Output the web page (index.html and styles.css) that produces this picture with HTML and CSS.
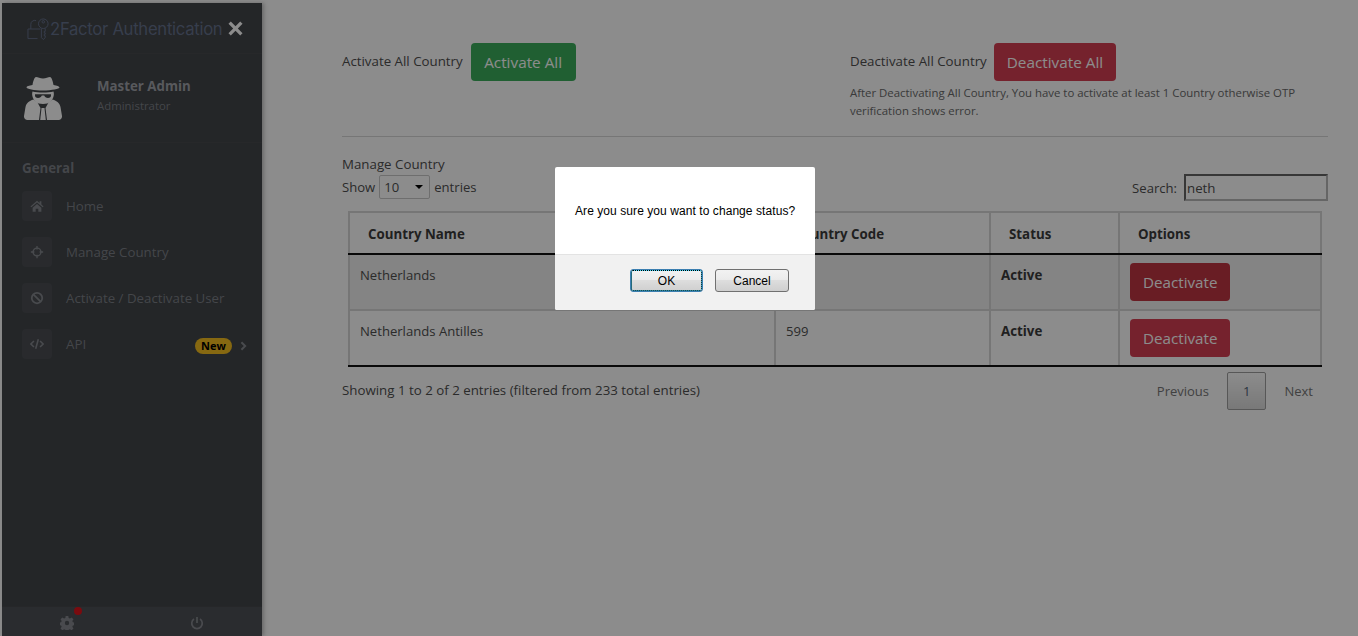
FILE: index.html
```html
<!DOCTYPE html>
<html lang="en">
<head>
  <meta charset="UTF-8" />
  <title>Manage Country</title>
  <link rel="stylesheet" href="styles.css">
</head>
<body>
  <div class="page">
    <aside class="sidebar">
      <div class="brand">
        <svg class="brand-logo" viewBox="0 0 24 24" fill="none" stroke="currentColor" stroke-width="1">
          <path d="M1 12h13M1 12v10h10M4 12V7a4 4 0 0 1 5.500-3.700" />
          <circle cx="17" cy="6.500" r="5" />
          <circle cx="17" cy="4.500" r="1.300" />
          <path d="M15 11.500V21l2 2 2-2v-2h-1v-1.500h1V16h-1v-1.500h1v-3" />
        </svg>
        <span class="brand-name">2Factor Authentication</span>
        <svg class="brand-close" viewBox="0 0 16 16" fill="currentColor">
          <path d="M3 0.500 8 5.500 13 0.500 15.500 3 10.500 8 15.500 13 13 15.500 8 10.500 3 15.500 0.500 13 5.500 8 0.500 3z" />
        </svg>
      </div>
      <div class="profile">
        <svg class="profile-icon" viewBox="0 0 38 44" fill="currentColor">
          <path d="M12 1c2 0 4 1.500 7 1.500S24 1 26 1c1.500 0 3 4.500 3.500 8 3.500.6 6 1.500 6 2.500S28 14.500 19 14.500 2.500 13 2.500 11.500 5 9.600 8.500 9C9 5.500 10.500 1 12 1z" />
          <path fill-rule="evenodd" d="M8.500 15.500c3 .7 6.500 1 10.500 1s7.500 -.3 10.500 -1c.5 1.500 .5 3.500 0 5-1 4 -4 7.500 -10.500 7.500S9.500 24.500 8.500 20.500c-.5 -1.500 -.5 -3.500 0 -5zM11 18.300v1.200c0 1.500 1 2.500 3 2.500s3.200 -1 3.800 -2.500h2.400c.6 1.500 1.800 2.500 3.800 2.500s3 -1 3 -2.500v-1.200z" />
          <path d="M9.500 23.500C5 25 2.500 27 1.500 31L0 40c-.2 2 1 4 3.500 4H15l1.500 -12-3 -5.500zM28.500 23.500c4.500 1.500 7 3.500 8 7.500l1.500 9c.2 2 -1 4 -3.500 4H23l-1.500 -12 3 -5.500z" />
          <path d="M17.500 32h3l1.300 12h-5.600z" />
        </svg>
        <div class="profile-text">
          <div class="profile-name">Master Admin</div>
          <div class="profile-role">Administrator</div>
        </div>
      </div>
      <nav class="nav">
        <h3 class="nav-title">General</h3>
        <a class="nav-item">
          <span class="nav-icon">
            <svg viewBox="0 0 16 16" fill="currentColor"><path d="M8 2 0.500 8.500l1 1L8 4l6.500 5.500 1 -1L13 6.300V2.500h-2v2zM3 10 8 5.700 13 10v4.500H9.500V11h-3v3.500H3z" /></svg>
          </span>
          <span>Home</span>
        </a>
        <a class="nav-item">
          <span class="nav-icon">
            <svg viewBox="0 0 16 16" fill="none" stroke="currentColor" stroke-width="1.500"><circle cx="8" cy="8" r="4.500" /><path d="M8 1v4M8 11v4M1 8h4M11 8h4" /></svg>
          </span>
          <span>Manage Country</span>
        </a>
        <a class="nav-item">
          <span class="nav-icon">
            <svg viewBox="0 0 16 16" fill="none" stroke="currentColor" stroke-width="2"><circle cx="8" cy="8" r="6" /><path d="M3.800 3.800l8.400 8.400" /></svg>
          </span>
          <span>Activate / Deactivate User</span>
        </a>
        <a class="nav-item">
          <span class="nav-icon">
            <svg viewBox="0 0 16 16" fill="none" stroke="currentColor" stroke-width="1.800"><path d="M4.500 4.500 1 8l3.500 3.500M11.500 4.500 15 8l-3.500 3.500M9.500 2.500l-3 11" /></svg>
          </span>
          <span>API</span>
          <span class="badge">New</span>
          <svg class="chevron" viewBox="0 0 8 12" fill="none" stroke="currentColor" stroke-width="2.400"><path d="M1.500 1.500 6 6l-4.500 4.500" /></svg>
        </a>
      </nav>
      <div class="sidebar-foot">
        <span class="foot-link">
          <svg viewBox="0 0 16 16" fill="currentColor" fill-rule="evenodd"><path d="M6.500 0h3l.4 2.300 1.500.6 1.900-1.300 2.100 2.100-1.300 1.900.6 1.500 2.300.4v3l-2.300.4-.6 1.500 1.300 1.900-2.100 2.100-1.900-1.300-1.500.6-.4 2.300h-3l-.4-2.300-1.500-.6-1.900 1.300-2.100-2.100 1.300-1.900-.6-1.500-2.300-.4v-3l2.300-.4.6-1.500-1.300-1.900 2.100-2.100 1.900 1.300 1.500-.6zM8 5.500a2.500 2.500 0 1 0 0 5 2.500 2.500 0 0 0 0-5z" /></svg>
          <i class="foot-dot"></i>
        </span>
        <span class="foot-link">
          <svg viewBox="0 0 16 16" fill="none" stroke="currentColor" stroke-width="2"><path d="M4.500 3.500a6 6 0 1 0 7 0M8 1v7" /></svg>
        </span>
      </div>
    </aside>

    <main class="main">
      <div class="bulk">
        <div class="bulk-col bulk-activate">
          <div class="bulk-row">
            <span class="bulk-label">Activate All Country</span>
            <button class="btn btn-green">Activate All</button>
          </div>
        </div>
        <div class="bulk-col">
          <div class="bulk-row">
            <span class="bulk-label">Deactivate All Country</span>
            <button class="btn btn-red">Deactivate All</button>
          </div>
          <p class="bulk-note">After Deactivating All Country, You have to activate at least 1 Country otherwise OTP verification shows error.</p>
        </div>
      </div>
      <hr class="rule">

      <div class="section-title">Manage Country</div>
      <div class="table-tools">
        <label class="length">Show <span class="fake-select">10<i class="caret"></i></span> entries</label>
        <label class="search">Search: <input type="text" value="neth"></label>
      </div>

      <table class="grid">
        <colgroup>
          <col class="col-name"><col class="col-code"><col class="col-status"><col class="col-opts">
        </colgroup>
        <thead>
          <tr><th>Country Name</th><th>Country Code</th><th>Status</th><th>Options</th></tr>
        </thead>
        <tbody>
          <tr class="hovered">
            <td>Netherlands</td><td>31</td><td><b>Active</b></td>
            <td><button class="btn btn-red btn-row">Deactivate</button></td>
          </tr>
          <tr>
            <td>Netherlands Antilles</td><td>599</td><td><b>Active</b></td>
            <td><button class="btn btn-red btn-row">Deactivate</button></td>
          </tr>
        </tbody>
      </table>

      <div class="table-foot">
        <span>Showing 1 to 2 of 2 entries (filtered from 233 total entries)</span>
        <div class="pager">
          <a>Previous</a>
          <a class="current">1</a>
          <a>Next</a>
        </div>
      </div>
    </main>
  </div>

  <div class="overlay"></div>
  <div class="dialog">
    <div class="dialog-body">Are you sure you want to change status?</div>
    <div class="dialog-foot">
      <button class="dlg-btn dlg-ok">OK</button>
      <button class="dlg-btn">Cancel</button>
    </div>
  </div>
</body>
</html>
```

FILE: styles.css
```css
html, body {
  margin: 0;
  height: 100%;
  overflow: hidden;
}
body {
  font-family: "Open Sans", sans-serif;
  font-size: 13.300px;
  color: #4f4f4f;
  background: #fff;
}
.page {
  display: flex;
  height: 633px;
  padding: 3px 0 0 2px;
}

/* Sidebar */
.sidebar {
  width: 260px;
  flex: none;
  display: flex;
  flex-direction: column;
  background: #424549;
  box-shadow: 2px 0 4px rgba(0, 0, 0, 0.25);
}
.brand {
  height: 49px;
  padding-top: 1px;
  display: flex;
  align-items: center;
  padding-left: 25px;
  border-bottom: 1px solid #47494e;
  color: #65718c;
}
.brand-logo {
  width: 23px;
  height: 24px;
}
.brand-name {
  font-family: Inter, sans-serif;
  font-size: 16.700px;
  white-space: nowrap;
  letter-spacing: -0.300px;
}
.brand-close {
  width: 15px;
  height: 15px;
  margin-left: 6px;
  color: #fff;
}
.profile {
  height: 88px;
  display: flex;
  align-items: center;
  padding-left: 22px;
  border-bottom: 1px solid #47494e;
}
.profile-icon {
  width: 38px;
  height: 44px;
  color: #fff;
}
.profile-text {
  margin: -4px 0 0 35px;
}
.profile-name {
  font-size: 13.300px;
  font-weight: 700;
  color: #a0a3a9;
  line-height: 20px;
}
.profile-role {
  font-size: 11.400px;
  color: #7c8087;
  line-height: 20px;
}
.nav {
  flex: 1;
  padding: 15px 0 0 20px;
}
.nav-title {
  margin: 0 0 13px;
  font-size: 13.300px;
  line-height: 20px;
  font-weight: 700;
  color: #7c8087;
}
.nav-item {
  height: 30px;
  margin-bottom: 16px;
  display: flex;
  align-items: center;
  color: #7c8087;
}
.nav-icon {
  width: 30px;
  height: 30px;
  flex: none;
  margin-right: 14px;
  display: flex;
  align-items: center;
  justify-content: center;
  background: #4b4e53;
  border-radius: 4px;
  color: #85888e;
}
.nav-icon svg {
  width: 14px;
  height: 14px;
}
.badge {
  margin-left: auto;
  width: 37px;
  height: 16px;
  margin-top: 3px;
  border-radius: 8px;
  background: #f4bd1f;
  color: #000;
  font-size: 11px;
  font-weight: 700;
  line-height: 16px;
  text-align: center;
}
.chevron {
  width: 7px;
  height: 10px;
  margin: 4px 15px 0 8px;
  color: #85888e;
}
.sidebar-foot {
  height: 29px;
  display: flex;
  background: #4d5056;
  border-top: 1px solid #45474c;
}
.foot-link {
  width: 50%;
  display: flex;
  justify-content: center;
  align-items: center;
  color: #85888e;
  position: relative;
}
.foot-link svg {
  width: 14px;
  height: 14px;
  margin-top: 3px;
}
.foot-dot {
  position: absolute;
  left: 72px;
  top: 0;
  width: 8px;
  height: 8px;
  border-radius: 50%;
  background: #e0141c;
}

/* Main */
.main {
  flex: 1;
  min-width: 0;
  padding: 40px 30px 0 80px;
}
.bulk {
  display: flex;
  min-height: 93px;
}
.bulk-col {
  width: 478px;
}
.bulk-activate {
  width: 508px;
}
.bulk-row {
  display: flex;
  align-items: flex-start;
}
.bulk-label {
  margin-right: 7px;
  line-height: 36px;
}
.btn {
  height: 38px;
  padding: 0 12px;
  border: 1px solid transparent;
  border-radius: 4px;
  font-family: "Open Sans", sans-serif;
  font-size: 15.300px;
  color: #fff;
}
.btn-green {
  margin-left: 1px;
  padding: 0 12.500px;
  background: #3bae5c;
}
.btn-red {
  background: #d63f53;
}
.btn-row {
  font-size: 15.200px;
}
.bulk-note {
  margin: 3px 0 0;
  font-size: 11.400px;
  line-height: 18px;
  color: #6a6a6a;
}
.rule {
  margin: 0;
  border: 0;
  border-top: 1px solid #d8d8d8;
}
.section-title {
  margin-top: 17px;
  line-height: 20px;
}
.table-tools {
  display: flex;
  justify-content: space-between;
  align-items: flex-start;
  height: 37px;
  font-size: 13.100px;
}
.length {
  display: flex;
  align-items: center;
  height: 24px;
  margin-top: 1px;
}
.fake-select {
  width: 51px;
  height: 24px;
  box-sizing: border-box;
  margin: 0 4px;
  padding-left: 4px;
  border: 1px solid #c9c9c9;
  border-radius: 2px;
  line-height: 22px;
  position: relative;
}
.caret {
  position: absolute;
  right: 6px;
  top: 9px;
  border: 4px solid transparent;
  border-top-color: #000;
  border-bottom: 0;
}
.search {
  display: flex;
  align-items: center;
}
.search input {
  width: 144px;
  height: 27px;
  box-sizing: border-box;
  margin-left: 7px;
  padding: 0 1px;
  border: 2px inset #b8b8b8;
  background: transparent;
  font-family: "Open Sans", sans-serif;
  font-size: 13.300px;
  color: #4f4f4f;
}
.grid {
  width: 974px;
  margin-left: 6px;
  border-collapse: collapse;
  table-layout: fixed;
  border: 2px solid #d8d8d8;
  border-bottom: 0;
}
.col-name { width: 426px; }
.col-code { width: 215px; }
.col-status { width: 129px; }
.grid th, .grid td {
  border: 2px solid #d8d8d8;
  text-align: left;
  vertical-align: top;
}
.grid th {
  height: 42px;
  box-sizing: border-box;
  padding: 12px 18px 0;
  font-weight: 700;
  color: #3b3b3b;
  border-bottom: 2px solid #111;
}
.grid td {
  height: 56px;
  box-sizing: border-box;
  padding: 11px 10px 0;
  font-size: 13.100px;
  color: #4f4f4f;
}
.grid tbody tr:last-child td {
  border-bottom: 2px solid #111;
}
.grid td b {
  font-size: 13.300px;
  color: #3b3b3b;
}
.grid td:last-child {
  padding-top: 8px;
}
.hovered td {
  background: #f0f0f0;
}
.hovered .btn-red {
  background: #c03542;
}
.table-foot {
  display: flex;
  justify-content: space-between;
  align-items: flex-start;
  margin-top: 14px;
}
.pager {
  display: flex;
  align-items: center;
  margin-top: -9px;
  padding-right: 1px;
  font-size: 13px;
  color: #777;
}
.pager a {
  padding: 8px 14px;
  line-height: 20px;
}
.pager .current {
  margin: 0 4px;
  padding: 8px 15px;
  border: 1px solid #9f9f9f;
  border-radius: 2px;
  background: linear-gradient(#fff, #dcdcdc);
  color: #4f6276;
}

/* Dialog */
.overlay {
  position: fixed;
  inset: 0;
  background: rgba(0, 0, 0, 0.45);
}
.dialog {
  position: fixed;
  left: 555px;
  top: 167px;
  width: 260px;
  height: 143px;
  display: flex;
  flex-direction: column;
  background: #fff;
  border-radius: 2px;
  font-family: "Liberation Sans", Arial, sans-serif;
  font-size: 12px;
  color: #000;
}
.dialog-body {
  height: 87px;
  box-sizing: border-box;
  padding: 37px 0 0 20px;
  line-height: 14px;
  white-space: nowrap;
  letter-spacing: 0.070px;
}
.dialog-foot {
  flex: 1;
  display: flex;
  justify-content: flex-end;
  align-items: flex-start;
  gap: 12px;
  padding: 14px 26px 0 0;
  background: #f1f1f1;
  border-top: 1px solid #e3e3e3;
  border-radius: 0 0 2px 2px;
}
.dlg-btn {
  width: 74px;
  height: 23px;
  padding: 0;
  border: 1px solid #707070;
  border-radius: 3px;
  background: linear-gradient(#f2f2f2 0%, #ebebeb 45%, #dddddd 50%, #cfcfcf 100%);
  font-family: "Liberation Sans", Arial, sans-serif;
  font-size: 12px;
  color: #000;
}
.dlg-ok {
  width: 73px;
  border-color: #3c7fb1;
  outline: 1px dotted #000;
  outline-offset: -2px;
  box-shadow: inset 0 0 0 1px #48d5f7;
}
```
